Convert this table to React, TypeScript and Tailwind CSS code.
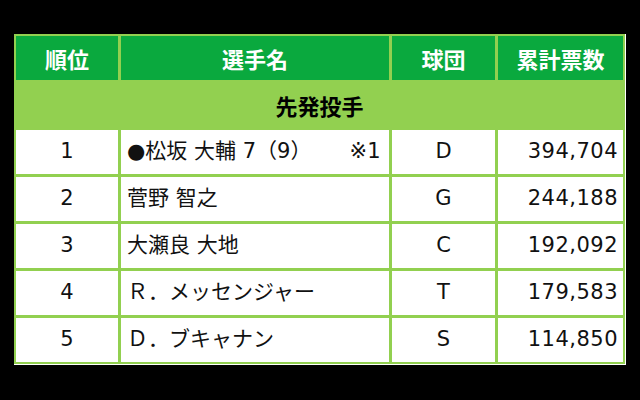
const rows = [
  { rank: '1', name: '●松坂 大輔 7（9）　　 ※1', team: 'D', votes: '394,704' },
  { rank: '2', name: '菅野 智之', team: 'G', votes: '244,188' },
  { rank: '3', name: '大瀬良 大地', team: 'C', votes: '192,092' },
  { rank: '4', name: 'Ｒ．メッセンジャー', team: 'T', votes: '179,583' },
  { rank: '5', name: 'Ｄ．ブキャナン', team: 'S', votes: '114,850' },
];

const head = ['順位', '選手名', '球団', '累計票数'];

export default function App() {
  return (
    <div className="h-[400px] w-[640px] bg-black pl-[14px] pt-[34px]">
      <div className="w-fit bg-white pb-px pr-px">
        <div className="grid grid-cols-[102px_268px_103px_125px] auto-rows-[44px] gap-[3px] bg-[#92d050] p-[2px] font-['DejaVu_Sans','Noto_Sans_CJK_JP',sans-serif] text-[21px] text-[#111]">
          {head.map((h) => (
            <div
              key={h}
              className="flex items-center justify-center bg-[#0aa93e] font-['Noto_Sans_CJK_JP',sans-serif] text-[22px] font-bold text-white"
            >
              {h}
            </div>
          ))}
          <div className="col-span-4 flex items-center justify-center font-['Noto_Sans_CJK_JP',sans-serif] text-[22px] font-bold text-black">
            先発投手
          </div>
          {rows.map((r) => (
            <div key={r.rank} className="contents">
              <div className="flex items-center justify-center bg-white">{r.rank}</div>
              <div className="flex items-center whitespace-pre bg-white pl-[6px]">{r.name}</div>
              <div className="flex items-center justify-center bg-white">{r.team}</div>
              <div className="flex items-center justify-end bg-white pr-[5px] tracking-[0.5px]">{r.votes}</div>
            </div>
          ))}
        </div>
      </div>
    </div>
  );
}
